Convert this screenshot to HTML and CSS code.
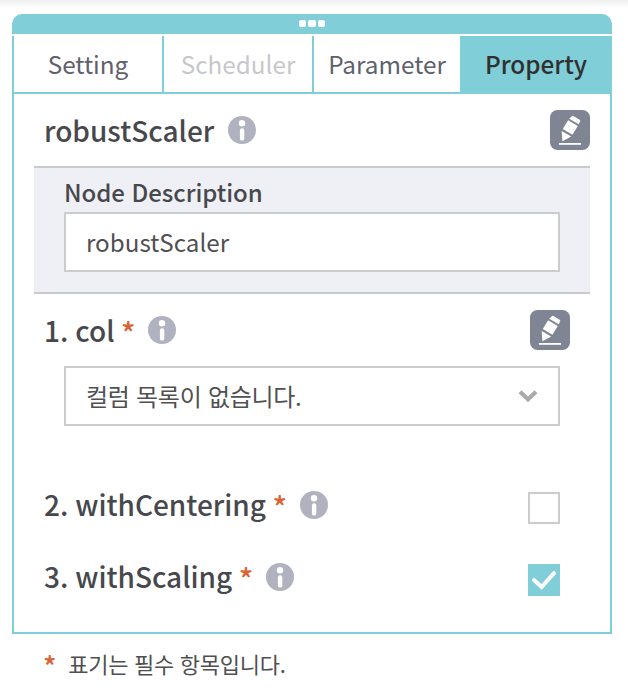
FILE: index.html
```html
<!DOCTYPE html>
<html lang="ko">
<head>
<meta charset="utf-8">
<title>Property</title>
<link rel="stylesheet" href="styles.css">
</head>
<body>
<svg class="defs" width="0" height="0" aria-hidden="true">
  <symbol id="info" viewBox="0 0 28 28">
    <circle cx="14" cy="14" r="14" fill="#b0b2bf"/>
    <circle cx="14" cy="7.3" r="3.2" fill="#fff"/>
    <rect x="11.9" y="12.2" width="4.4" height="12.4" rx="2.2" fill="#fff"/>
  </symbol>
  <symbol id="edit" viewBox="0 0 40 40">
    <rect width="40" height="40" rx="7.5" fill="#808593"/>
    <g fill="#fff">
      <path d="M21.8 6.2Q22.4 5.5 23.3 6L29.7 9.7Q30.6 10.3 30.2 11.2L28.7 14.3L19.2 8.8Z"/>
      <path d="M18.1 10.3L27.8 15.9L22.4 24.8L12.8 19.1Z"/>
      <path d="M11.7 21L21.2 26.6L12.4 31.3Z"/>
      <rect x="9" y="33" width="22" height="1.8"/>
    </g>
  </symbol>
</svg>
<main class="panel">
  <div class="handle"><i></i><i></i><i></i></div>
  <nav class="tabs">
    <div class="tab">Setting</div>
    <div class="tab disabled">Scheduler</div>
    <div class="tab">Parameter</div>
    <div class="tab active">Property</div>
  </nav>
  <section class="body">
    <header class="row title">
      <h1>robustScaler</h1><svg class="info"><use href="#info"/></svg>
      <svg class="edit"><use href="#edit"/></svg>
    </header>
    <div class="description">
      <div class="label">Node Description</div>
      <div class="field">robustScaler</div>
    </div>
    <div class="row col">
      <h2>1. col</h2><span class="star">*</span><svg class="info"><use href="#info"/></svg>
      <svg class="edit"><use href="#edit"/></svg>
    </div>
    <div class="field select"><span>컬럼 목록이 없습니다.</span>
      <svg class="chevron" viewBox="0 0 20 14"><path d="M2 2.8L10 10.3L18 2.8" fill="none" stroke="#aaa" stroke-width="4.2"/></svg>
    </div>
    <div class="row option">
      <h2>2. withCentering</h2><span class="star">*</span><svg class="info"><use href="#info"/></svg>
      <span class="check"></span>
    </div>
    <div class="row option">
      <h2>3. withScaling</h2><span class="star">*</span><svg class="info"><use href="#info"/></svg>
      <span class="check checked"><svg viewBox="0 0 32 32"><path d="M6 16L13.6 23L26 9.2" fill="none" stroke="#fff" stroke-width="4" stroke-linecap="round"/></svg></span>
    </div>
  </section>
</main>
<footer class="note"><span class="star">*</span><span>표기는 필수 항목입니다.</span></footer>
</body>
</html>
```
FILE: styles.css
```css
* { box-sizing: border-box; }
body {
  margin: 0;
  height: 694px;
  padding: 14px 16px 0 12px;
  overflow: hidden;
  background: linear-gradient(#efefef, #fff 8px);
  font-family: "Noto Sans CJK KR", "Noto Sans", sans-serif;
  color: #47484d;
}
.defs { position: absolute; }
.panel { width: 600px; height: 620px; }
.handle {
  height: 20px;
  display: flex;
  justify-content: center;
  gap: 2px;
  padding-top: 6px;
  background: #80ced7;
  border-radius: 10px 10px 0 0;
}
.handle i { width: 7.4px; height: 7px; border-radius: 2px; background: #fff; }
.tabs {
  display: grid;
  grid-template-columns: 150px 150px 146px 150px;
  height: 58px;
  margin-top: 2px;
  border: solid #80ced7;
  border-width: 0 2px 2px;
}
.tab {
  border-right: 2px solid #80ced7;
  text-align: center;
  font-size: 24.3px;
  line-height: 56px;
  font-weight: 400;
  color: #5e616c;
}
.tab:nth-child(3) { border-right: 0; }
.disabled { color: #c7c8cc; }
.active { background: #80ced7; color: #303030; font-weight: 500; border-right: 0; padding-left: 2px; }
.body {
  height: 540px;
  border: solid #80ced7;
  border-width: 0 2px 2px;
  padding: 16px 20px 0;
}
.row { display: flex; align-items: center; height: 40px; padding-left: 10px; }
h1, h2 { margin: 0; font-size: 28px; font-weight: 500; line-height: 40px; white-space: pre; }
h1 { width: 171px; }
h2 { word-spacing: -1px; }
.info { width: 28px; height: 28px; margin-left: 13px; }
.edit { width: 40px; height: 40px; margin-left: auto; }
.description {
  height: 128px;
  margin-top: 16px;
  padding: 6px 30px 0;
  background: #eff0f5;
  border: solid #c9cbcb;
  border-width: 2px 0;
}
.label { font-size: 24px; font-weight: 500; line-height: 36px; height: 38px; letter-spacing: -0.05px; }
.field {
  height: 60px;
  border: 2px solid #cbcccc;
  padding: 0 20px;
  background: #fff;
  font-size: 24.2px;
  line-height: 56px;
  color: #505052;
}
.col { margin-top: 16px; padding-right: 20px; }
.star { color: #d96333; font-size: 30px; font-weight: 500; line-height: 40px; margin-left: 6.5px; padding-top: 3px; }
.star + .info { margin-left: 12.5px; }
.select { font-size: 24px; letter-spacing: -0.28px; margin: 16px 30px 0; display: flex; justify-content: space-between; align-items: center; }
.chevron { width: 20px; height: 14px; }
.option { margin-top: 58px; padding-right: 30px; }
.option + .option { margin-top: 32px; }
.option .info { margin-top: 1px; }
.check { width: 32px; height: 32px; margin-left: auto; margin-top: 8px; border: 2px solid #cbcccc; }
.checked { border: 0; background: #80ced7; }
.check svg { display: block; width: 32px; height: 32px; }
.note { display: flex; align-items: center; height: 58px; padding-left: 31px; font-size: 22px; letter-spacing: -0.28px; color: #505052; }
.note .star { margin: 0 12px 0 0; font-size: 28px; }
```
